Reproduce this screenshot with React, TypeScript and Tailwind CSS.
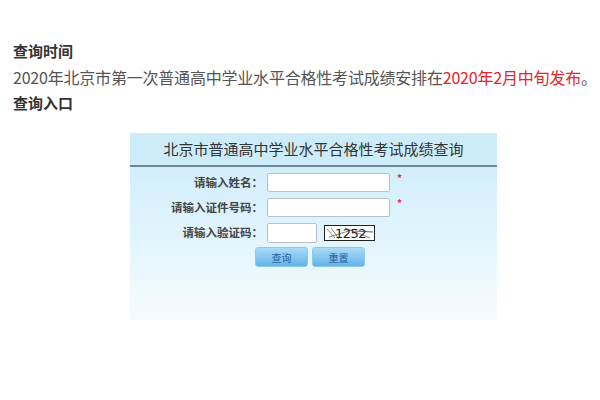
import React from "react";

const cjk = { fontFamily: '"Noto Sans CJK SC", "Noto Sans", sans-serif' };

function Captcha() {
  return (
    <div className="w-[51px] h-[16px] border border-[#222] bg-white overflow-hidden font-normal">
      <svg width="49" height="14" viewBox="0 0 49 14">
        <path d="M2 3 L10 12 M6 2 L14 13 M20 2 L45 12 M4 11 L30 3" stroke="#555" strokeWidth="0.7" fill="none" />
        <text x="10" y="12" fontSize="13" fontWeight="400" fontFamily="'DejaVu Sans', sans-serif" fill="#222" letterSpacing="-0.5">
          1252
        </text>
        <path d="M30 5 L48 6" stroke="#333" strokeWidth="0.8" />
      </svg>
    </div>
  );
}

export default function App() {
  return (
    <div className="w-[600px] h-[400px] bg-white overflow-hidden" style={cjk}>
      <div className="pl-[13px] pt-[41px]">
        <div className="text-[15px] leading-[20px] font-bold text-[#333]">查询时间</div>
        <div className="text-[16px] leading-[24px] mt-[4px] text-[#555] whitespace-nowrap tracking-[-0.2px]">
          2020年北京市第一次普通高中学业水平合格性考试成绩安排在
          <span className="text-[#e8232a]">2020年2月中旬发布</span>。
        </div>
        <div className="text-[15px] leading-[20px] mt-[4px] font-bold text-[#333]">查询入口</div>
      </div>

      <div className="ml-[130px] mt-[20px] w-[367px] h-[187px] flex flex-col">
        <div className="h-[32px] bg-[#cdecf9] flex items-center justify-center text-[15px] text-[#333]">
          北京市普通高中学业水平合格性考试成绩查询
        </div>
        <div className="h-[2px] bg-[#6e8791]" />
        <div className="flex-1 bg-gradient-to-b from-[#d2eefb] via-[#e3f5fd] to-[#f6fbfe] pt-[6px]">
          <div className="grid grid-cols-[133px_1fr] gap-x-[4px] gap-y-[6px] items-center text-[11.5px] font-bold text-[#444]">
            <div className="text-right">请输入姓名：</div>
            <div className="flex items-start gap-[7px]">
              <div className="w-[123px] h-[19px] bg-white border border-[#b7c2c7] rounded-[2px]" />
              <span className="text-[#e0304a] text-[10px] leading-[10px]">*</span>
            </div>
            <div className="text-right">请输入证件号码：</div>
            <div className="flex items-start gap-[7px]">
              <div className="w-[123px] h-[19px] bg-white border border-[#b7c2c7] rounded-[2px]" />
              <span className="text-[#e0304a] text-[10px] leading-[10px]">*</span>
            </div>
            <div className="text-right">请输入验证码：</div>
            <div className="flex items-center gap-[7px]">
              <div className="w-[50px] h-[20px] bg-white border border-[#b7c2c7] rounded-[2px]" />
              <Captcha />
            </div>
          </div>
          <div className="flex gap-[4px] ml-[125px] mt-[4px]">
            <button className="w-[53px] h-[20px] rounded-[3px] bg-gradient-to-b from-[#a9dbf6] to-[#62b3e8] border border-[#8ec8ec] text-[10px] text-[#2a5f9e]">
              查询
            </button>
            <button className="w-[53px] h-[20px] rounded-[3px] bg-gradient-to-b from-[#a9dbf6] to-[#62b3e8] border border-[#8ec8ec] text-[10px] text-[#2a5f9e]">
              重置
            </button>
          </div>
        </div>
      </div>
    </div>
  );
}
